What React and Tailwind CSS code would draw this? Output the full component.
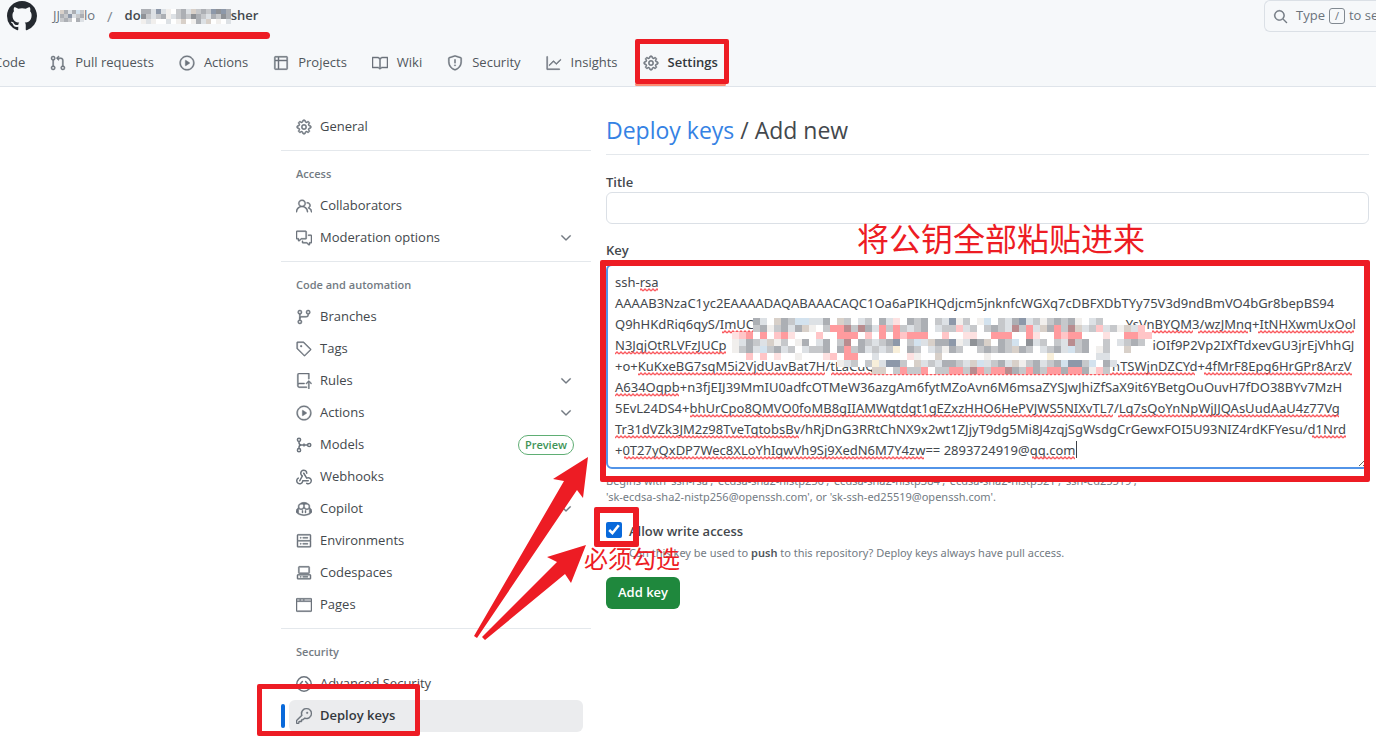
import { useState } from 'react';
import { RectangleEllipsis } from 'lucide-react';
import {
  GoBook, GoBrowser, GoChevronDown, GoCode, GoCodespaces, GoCommentDiscussion, GoCopilot, GoGear, GoGitBranch,
  GoGitPullRequest, GoGraph, GoKey, GoPeople, GoPlay, GoRepoPush, GoSearch, GoServer, GoShield, GoTable, GoTag,
} from 'react-icons/go';

const tabs = [
  { icon: GoCode, label: 'Code' },
  { icon: GoGitPullRequest, label: 'Pull requests' },
  { icon: GoPlay, label: 'Actions' },
  { icon: GoTable, label: 'Projects' },
  { icon: GoBook, label: 'Wiki' },
  { icon: GoShield, label: 'Security' },
  { icon: GoGraph, label: 'Insights' },
  { icon: GoGear, label: 'Settings', active: true },
];

const sections = [
  { items: [{ icon: GoGear, label: 'General' }] },
  {
    title: 'Access',
    items: [
      { icon: GoPeople, label: 'Collaborators' },
      { icon: GoCommentDiscussion, label: 'Moderation options', expandable: true },
    ],
  },
  {
    title: 'Code and automation',
    items: [
      { icon: GoGitBranch, label: 'Branches' },
      { icon: GoTag, label: 'Tags' },
      { icon: GoRepoPush, label: 'Rules', expandable: true },
      { icon: GoPlay, label: 'Actions', expandable: true },
      { icon: ModelsIcon, label: 'Models', badge: 'Preview' },
      { icon: WebhookIcon, label: 'Webhooks' },
      { icon: GoCopilot, label: 'Copilot', expandable: true },
      { icon: GoServer, label: 'Environments' },
      { icon: GoCodespaces, label: 'Codespaces' },
      { icon: GoBrowser, label: 'Pages' },
    ],
  },
  {
    title: 'Security',
    items: [
      { icon: CodeCircleIcon, label: 'Advanced Security' },
      { icon: GoKey, label: 'Deploy keys', active: true },
      { icon: RectangleEllipsis, label: 'Secrets and variables', expandable: true },
    ],
  },
];

const gap = (n) => ' '.repeat(n);

const initialKey = [
  'ssh-rsa',
  'AAAAB3NzaC1yc2EAAAADAQABAAACAQC1Oa6aPIKHQdjcm5jnknfcWGXq7cDBFXDbTYy75V3d9ndBmVO4bGr8bepBS94',
  `Q9hHKdRiq6qyS/ImUC${gap(110)}YsVnBYQM3/wzJMnq+ItNHXwmUxOol`,
  `N3JqjOtRLVFzJUCp${gap(126)}iOIf9P2Vp2IXfTdxevGU3jrEjVhhGJ`,
  `+o+KuKxeBG7sqM5i2VjdUavBat7H/tLaCuQ${gap(70)}nTSWjnDZCYd+4fMrF8Epg6HrGPr8ArzV`,
  'A634Oqpb+n3fjEIJ39MmIU0adfcOTMeW36azgAm6fytMZoAvn6M6msaZYSJwJhiZfSaX9it6YBetgOuOuvH7fDO38BYv7MzH',
  '5EvL24DS4+bhUrCpo8QMVO0foMB8gIIAMWqtdgt1gEZxzHHO6HePVJWS5NIXvTL7/Lq7sQoYnNpWjJJQAsUudAaU4z77Vg',
  'Tr31dVZk3JM2z98TveTqtobsBv/hRjDnG3RRtChNX9x2wt1ZJjyT9dg5Mi8J4zqjSgWsdgCrGewxFOI5U93NIZ4rdKFYesu/d1Nrd',
  '+0T27yQxDP7Wec8XLoYhIgwVh9Sj9XedN6M7Y4zw== 2893724919@qq.com',
].join('\n');

// [line, from, to] of every spell-check underline
const squiggles = [
  [0, 25, 43],
  [2, 107, 138], [2, 537, 578], [2, 583, 633], [2, 643, 739],
  [3, 0, 111],
  [4, 23, 210], [4, 216, 580], [4, 589, 737],
  [5, 0, 64],
  [6, 75, 498], [6, 503, 724],
  [7, 0, 184], [7, 697, 731],
  [8, 9, 309], [8, 417, 460],
];

const palette = {
  w: '#ffffff', a: '#f1efed', b: '#dde1e5', c: '#c6c8cb', d: '#acafb4', e: '#8f9297', l: '#d3e2ee',
  s: '#8d98a9', t: '#d8d0c9', p: '#fde1e1', q: '#ffc5c7', r: '#ff9b9e', m: '#b98c8f', y: '#f8efda',
};

const keyMosaic = [
  '...dbwtdcllbbdwtcwbcwdbpwdcdwcbsacwalwcbdsbcacdcdawbcww.....',
  '...cdacdbdtawcrrmcmdbrcrcbcdwbccqbcwcdcbmcrbtdrcmtbcqbcatbq.',
  'pqrwrwqrpwwwqwwrrrwqwrwrqrrrwwqwwppwwrrrwwrpwwrqrrwwwpwwrrqq',
  'abdcbtacwadwbdwcmwdcbcdswclbtddsabedtwdclwebcwcbmcdwwcwbcdc.',
  'acdblcdbcwbccdwdrcdbcbcywdcwbcadcwwcdcdctdcwbcdblcdwacwwtww.',
  'wwqwqwpwwawwwpqwrrwwbwwwwpawwtwwwwwwawwwwwwwwywwwwwwbb......',
  '...............abcwcybsscwtbcbddcbtlbcdbtacdbcdlssclwdb.....',
  '....................ttwcrccrwccrrcmrcrrmdcrdcrrdrrdaqc......',
];

const ownerMosaic = ['tdbdlc', 'dcsbcd', 'cdcwdb'];
const repoMosaic = ['ddbsbawcdbtcdcsesd', 'ecbcdabcdcedcbdced', 'abawwbwatwadbtwawb'];

function GithubMark({ className }) {
  return (
    <svg className={className} viewBox="0 0 16 16" fill="currentColor" aria-hidden="true">
      <path d="M8 0c4.42 0 8 3.58 8 8a8.013 8.013 0 0 1-5.45 7.59c-.4.08-.55-.17-.55-.38 0-.27.01-1.13.01-2.2 0-.75-.25-1.23-.54-1.48 1.78-.2 3.65-.88 3.65-3.95 0-.88-.31-1.59-.82-2.15.08-.2.36-1.02-.08-2.12 0 0-.67-.22-2.2.82-.64-.18-1.32-.27-2-.27-.68 0-1.36.09-2 .27-1.53-1.03-2.2-.82-2.2-.82-.44 1.1-.16 1.92-.08 2.12-.51.56-.82 1.28-.82 2.15 0 3.06 1.86 3.75 3.64 3.95-.23.2-.44.55-.51 1.07-.46.21-1.61.55-2.33-.66-.15-.24-.6-.83-1.23-.82-.67.01-.27.38.01.53.34.19.73.9.82 1.13.16.45.68 1.31 2.69.94 0 .67.01 1.3.01 1.49 0 .21-.15.45-.55.38A7.995 7.995 0 0 1 0 8c0-4.42 3.58-8 8-8Z" />
    </svg>
  );
}

function WebhookIcon({ size }) {
  return (
    <svg width={size} height={size} viewBox="0 0 16 16" fill="currentColor" aria-hidden="true">
      <path d="M5.5 4.25a2.25 2.25 0 0 1 4.5 0 .75.75 0 0 0 1.5 0 3.75 3.75 0 1 0-6.14 2.889l-2.272 4.258a.75.75 0 0 0 1.324.706L7 7.25a.75.75 0 0 0-.309-1.015A2.25 2.25 0 0 1 5.5 4.25Z" />
      <path d="M7.364 3.607a.75.75 0 0 1 1.03.257l2.608 4.349a3.75 3.75 0 1 1-.628 6.785.75.75 0 0 1 .752-1.299 2.25 2.25 0 1 0-.033-3.88.75.75 0 0 1-1.03-.256L7.107 4.636a.75.75 0 0 1 .257-1.03Z" />
      <path d="M2.9 8.776A.75.75 0 0 1 2.625 9.8 2.25 2.25 0 1 0 6 11.75a.75.75 0 0 1 .75-.751h5.5a.75.75 0 0 1 0 1.5H7.425a3.751 3.751 0 1 1-5.55-3.998.75.75 0 0 1 1.024.274Z" />
    </svg>
  );
}

function ModelsIcon({ size }) {
  return (
    <svg width={size} height={size} viewBox="0 0 16 16" fill="none" stroke="currentColor" strokeWidth="1.5" aria-hidden="true">
      <circle cx="3" cy="2.8" r="1.6" />
      <circle cx="3" cy="13.2" r="1.6" />
      <circle cx="13.2" cy="8" r="1.6" />
      <path d="M3 4.4v1.2c0 1.4 1 2.4 2.4 2.4H11.6M3 11.6v-1.2C3 9 4 8 5.4 8" />
      <path d="M8 6.5v3" />
    </svg>
  );
}

function CodeCircleIcon({ size }) {
  return (
    <svg width={size} height={size} viewBox="0 0 16 16" fill="none" stroke="currentColor" strokeWidth="1.5" strokeLinecap="round" strokeLinejoin="round" aria-hidden="true">
      <circle cx="8" cy="8" r="7.2" />
      <path d="M6.4 5.6 4.2 8l2.2 2.4M9.6 5.6 11.8 8l-2.2 2.4" />
    </svg>
  );
}

function Mosaic({ rows, cell, className }) {
  const cols = rows[0].length;
  return (
    <svg className={className} width={cols * cell} height={rows.length * cell} shapeRendering="crispEdges" aria-hidden="true">
      {rows.map((row, y) =>
        [...row].map((c, x) =>
          palette[c] ? <rect key={`${x}-${y}`} x={x * cell} y={y * cell} width={cell} height={cell} fill={palette[c]} /> : null
        )
      )}
    </svg>
  );
}

function SpellMarks() {
  return (
    <svg className="absolute left-[9px] top-2 w-[750px] h-[190px] pointer-events-none" aria-hidden="true">
      <defs>
        <pattern id="wave" width="4" height="4" patternUnits="userSpaceOnUse">
          <path d="M0 3 L2 1 L4 3" fill="none" stroke="#fa5a5f" strokeWidth="1.3" />
        </pattern>
      </defs>
      {squiggles.map(([line, from, to]) => (
        <g key={`${line}-${from}`} transform={`translate(0 ${line * 21 + 16})`}>
          <rect x={from} width={to - from} height="4" fill="url(#wave)" />
        </g>
      ))}
      <path d="M461.5 169v17" stroke="#3d4248" />
    </svg>
  );
}

function NavItem({ item }) {
  const Icon = item.icon;
  return (
    <li className="relative">
      {item.active && <span className="absolute left-0 top-1 h-6 w-1 rounded-full bg-[#0969da]" />}
      <a
        href="#"
        className={`mx-2 flex h-8 items-center gap-2 rounded-md pl-[7px] pr-[9px] text-[13px] ${item.active ? 'bg-[#ebecee] font-semibold text-[#33383d]' : 'text-[#43484d]'}`}
      >
        <span className="text-[#6b737c]"><Icon size={16} strokeWidth={0.7} /></span>
        <span className="flex-1 whitespace-nowrap">{item.label}</span>
        {item.badge && (
          <span className="rounded-full border border-[#5fae74] px-[6px] text-[11px] leading-[18px] font-semibold text-[#3f9457]">{item.badge}</span>
        )}
        {item.expandable && <GoChevronDown size={16} strokeWidth={0.7} className="text-[#6b737c]" />}
      </a>
      {item.active && <span className="absolute -left-6 -top-4 h-[52px] w-[163px] rounded-xs border-[5px] border-[#ed1c24]" />}
    </li>
  );
}

function Header() {
  return (
    <header className="border-b border-[#dfe4ea] bg-[#f6f8fa]">
      <div className="flex h-8 items-center">
        <GithubMark className="ml-[7px] h-[30px] w-[30px] shrink-0 text-[#24292f]" />
        <div className="ml-4 flex items-center gap-3 text-[13px]">
          <a href="#" className="flex items-center text-[#6b737c]">
            JJ<Mosaic rows={ownerMosaic} cell={4} />lo
          </a>
          <span className="text-[15px] text-[#818991]">/</span>
          <a href="#" className="relative flex items-center font-semibold text-[#43484d]">
            do<Mosaic rows={repoMosaic} cell={5} />sher
            <span className="absolute -left-4 -right-3 -bottom-[13px] h-[7px] rounded-full bg-[#ed1c24]" />
          </a>
        </div>
        <button
          type="button"
          className="ml-auto flex h-8 w-[112px] shrink-0 items-center overflow-hidden rounded-l-md border border-r-0 border-[#dbe0e6] pl-2 text-[13px] whitespace-nowrap text-[#6b737c]"
        >
          <GoSearch size={15} strokeWidth={0.7} className="mr-2 shrink-0" />
          Type
          <kbd className="mx-1 h-4 w-4 shrink-0 rounded-[3px] border border-[#818991] text-center font-[inherit] text-[11px] leading-[14px]">/</kbd>
          to search
        </button>
      </div>
      <nav className="-ml-[31px] flex h-[54px] items-center gap-[25px] pt-2 text-[13px] text-[#50565c]">
        {tabs.map(({ icon: Icon, label, active }) => (
          <a key={label} href="#" className={`relative flex h-11 items-center gap-[9px] ${active ? 'font-semibold text-[#33383d]' : ''}`}>
            <Icon size={16} strokeWidth={0.7} className="text-[#6b737c]" />
            {label}
            {active && (
              <>
                <span className="absolute -left-2 -right-2 -bottom-px h-[3px] rounded-full bg-[#fd8c73]" />
                <span className="absolute -left-2 -right-[11px] bottom-px h-[45px] rounded-xs border-[5px] border-[#ed1c24]" />
              </>
            )}
          </a>
        ))}
      </nav>
    </header>
  );
}

function Sidebar() {
  return (
    <nav className="pt-6">
      {sections.map((section, i) => (
        <div key={i} className={i > 0 ? 'mt-[7px] border-t border-[#e4e8ec] pt-[7px]' : ''}>
          {section.title && (
            <h3 className="flex h-8 items-center px-[15px] text-[11px] font-semibold text-[#737b83]">{section.title}</h3>
          )}
          <ul>
            {section.items.map((item) => <NavItem key={item.label} item={item} />)}
          </ul>
        </div>
      ))}
    </nav>
  );
}

function Arrows() {
  return (
    <svg className="pointer-events-none absolute left-[470px] top-[450px] h-[195px] w-[125px]" viewBox="470 450 125 195" fill="#ed1c24" aria-hidden="true">
      <path d="M474 636 L564 481 L553 479 L588 457 L583 498 L577 490 L477 638 Z" />
      <path d="M482 637 L557 562 L547 557 L586 545 L571 583 L565 574 L485 640 Z" />
    </svg>
  );
}

export default function App() {
  const [title, setTitle] = useState('');
  const [key, setKey] = useState(initialKey);
  const [canWrite, setCanWrite] = useState(true);

  return (
    <div className="relative h-screen overflow-hidden bg-white font-['Open_Sans','Noto_Sans_CJK_SC',sans-serif] text-[#43484d]">
      <Header />

      <div className="grid grid-cols-[310px_1fr] gap-[15px] pl-[281px] pr-[7px]">
        <Sidebar />

        <main className="pt-7">
          <h2 className="border-b border-[#e4e8ec] pb-2 text-[23px] leading-[31px]">
            <a href="#" className="text-[#3582e4]">Deploy keys</a> / Add new
          </h2>

          <form onSubmit={(e) => e.preventDefault()}>
            <label htmlFor="title" className="mt-[17px] block text-[13px] leading-5 font-semibold">Title</label>
            <input
              id="title"
              value={title}
              onChange={(e) => setTitle(e.target.value)}
              className="block h-8 w-full rounded-md border border-[#dbe0e6] px-2 text-[13px] outline-none"
            />

            <label htmlFor="key" className="mt-4 block text-[13px] leading-5 font-semibold">Key</label>
            <div className="relative mt-1">
              <textarea
                id="key"
                wrap="off"
                spellCheck={false}
                value={key}
                onChange={(e) => setKey(e.target.value)}
                className="block h-[205px] w-full resize-y overflow-hidden rounded-md border-2 border-[#5294e8] px-[7px] py-[6px] font-['Noto_Sans',sans-serif] text-[13px] leading-[21px] outline-none"
              />
              <SpellMarks />
              <Mosaic rows={keyMosaic} cell={7} className="pointer-events-none absolute left-[126px] top-[54px]" />
              <span className="pointer-events-none absolute -left-[6px] -right-px -top-1 h-[222px] rounded-xs border-[6px] border-[#ed1c24]" />
              <span className="absolute left-[251px] -top-[45px] text-[32px] leading-[40px] whitespace-nowrap text-[#ed1c24]">将公钥全部粘贴进来</span>
            </div>
            <p className="mt-1 font-['Noto_Sans',sans-serif] text-[11px] leading-4 text-[#737b83]">
              Begins with 'ssh-rsa', 'ecdsa-sha2-nistp256', 'ecdsa-sha2-nistp384', 'ecdsa-sha2-nistp521', 'ssh-ed25519',
              <br />
              'sk-ecdsa-sha2-nistp256@openssh.com', or 'sk-ssh-ed25519@openssh.com'.
            </p>

            <div className="relative mt-4 flex gap-[7px]">
              <input
                id="write"
                type="checkbox"
                checked={canWrite}
                onChange={(e) => setCanWrite(e.target.checked)}
                className="mt-px h-4 w-4 accent-[#0969da]"
              />
              <div>
                <label htmlFor="write" className="block text-[13px] leading-5 font-semibold">Allow write access</label>
                <p className="mt-1 font-['Noto_Sans',sans-serif] text-[11px] leading-4 text-[#737b83]">
                  Can this key be used to <b className="font-semibold text-[#50565c]">push</b> to this repository? Deploy keys always have pull access.
                </p>
              </div>
              <span className="pointer-events-none absolute -left-3 -top-[14px] h-10 w-[45px] rounded-xs border-[6px] border-[#ed1c24]" />
              <span className="absolute -left-[22px] top-[22px] text-[24px] leading-[32px] whitespace-nowrap text-[#ed1c24]">必须勾选</span>
            </div>

            <button type="submit" className="mt-4 h-8 rounded-md bg-[#1f883d] px-3 text-[13px] font-semibold text-white">Add key</button>
          </form>
        </main>
      </div>

      <Arrows />
    </div>
  );
}
